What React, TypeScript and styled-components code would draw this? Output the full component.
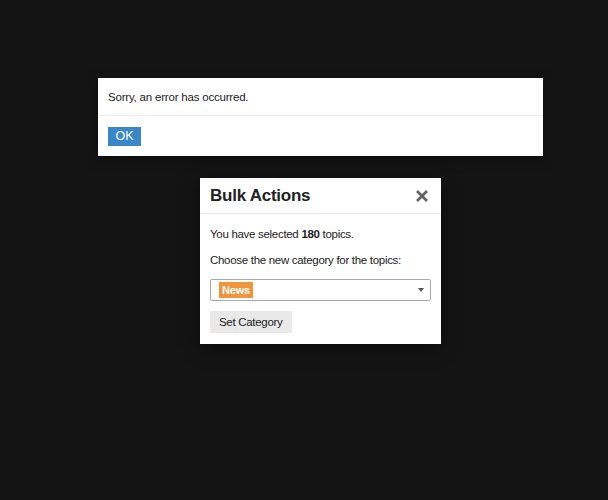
import * as React from 'react';
import styled, { createGlobalStyle } from 'styled-components';

const GlobalStyle = createGlobalStyle`
  html, body {
    margin: 0;
    padding: 0;
    background: #141414;
    font-family: 'Liberation Sans', Arial, Helvetica, sans-serif;
    color: #222;
  }
`;

const Page = styled('div')`
  width: 608px;
  height: 500px;
  padding: 78px 0 0 33px;
  box-sizing: border-box;
  display: flex;
  flex-direction: column;
  align-items: center;
  gap: 22px;
  overflow: hidden;
`;

const Alert = styled('div')`
  width: 445px;
  flex-shrink: 0;
  background: #fff;
  box-shadow: 0 3px 12px rgba(0, 0, 0, 0.4);
`;

const AlertBody = styled('div')`
  height: 37px;
  padding: 0 10px;
  display: flex;
  align-items: center;
  font-size: 11.5px;
  letter-spacing: -0.2px;
  border-bottom: 1px solid #ececec;
`;

const AlertFooter = styled('div')`
  height: 40px;
  padding: 0 10px;
  display: flex;
  align-items: center;
`;

const PrimaryButton = styled('button')`
  height: 19px;
  width: 33px;
  padding: 0;
  border: none;
  background: #3a86c8;
  color: #fff;
  font-family: inherit;
  font-size: 12.5px;
  cursor: pointer;
`;

const Modal = styled('div')`
  width: 241px;
  flex-shrink: 0;
  background: #fff;
  box-shadow: 0 4px 16px rgba(0, 0, 0, 0.5);
`;

const ModalHeader = styled('div')`
  height: 36px;
  padding: 0 12px 0 10px;
  display: flex;
  align-items: center;
  justify-content: space-between;
  border-bottom: 1px solid #ececec;
  box-sizing: border-box;
`;

const Title = styled('h3')`
  margin: 0;
  font-size: 17px;
  font-weight: bold;
  letter-spacing: -0.25px;
  color: #222;
`;

const Close = styled('button')`
  border: none;
  background: none;
  padding: 0;
  width: 14px;
  height: 14px;
  display: flex;
  align-items: center;
  justify-content: center;
  cursor: pointer;
`;

const ModalBody = styled('div')`
  padding: 13px 10px 11px;
  font-size: 11.5px;
  letter-spacing: -0.3px;
`;

const Line = styled('p')`
  margin: 0 0 12px;
  line-height: 14px;
`;

const Select = styled('div')`
  height: 22px;
  border: 1px solid #aaa;
  border-radius: 2px;
  box-sizing: border-box;
  display: flex;
  align-items: center;
  justify-content: space-between;
  padding: 0 6px 0 8px;
  margin: 1px 0 10px;
`;

const Badge = styled('span')`
  background: #f0953c;
  color: #fff;
  font-size: 11px;
  font-weight: bold;
  letter-spacing: -0.2px;
  padding: 2px 3px;
  line-height: 12px;
`;

const Caret = styled('span')`
  width: 0;
  height: 0;
  border-left: 3.5px solid transparent;
  border-right: 3.5px solid transparent;
  border-top: 4px solid #555;
`;

const Button = styled('button')`
  height: 22px;
  padding: 0 9px;
  border: none;
  background: #e9e9e9;
  color: #222;
  font-family: inherit;
  font-size: 11.5px;
  letter-spacing: -0.3px;
  cursor: pointer;
`;

const App: React.FC = () => {
  return (
    <>
      <GlobalStyle />
      <Page>
        <Alert>
          <AlertBody>Sorry, an error has occurred.</AlertBody>
          <AlertFooter>
            <PrimaryButton>OK</PrimaryButton>
          </AlertFooter>
        </Alert>
        <Modal>
          <ModalHeader>
            <Title>Bulk Actions</Title>
            <Close aria-label="close">
              <svg width="14" height="14" viewBox="0 0 14 14">
                <path d="M2 2 L12 12 M12 2 L2 12" stroke="#646464" strokeWidth="2.8" strokeLinecap="butt" />
              </svg>
            </Close>
          </ModalHeader>
          <ModalBody>
            <Line>
              You have selected <b>180</b> topics.
            </Line>
            <Line>Choose the new category for the topics:</Line>
            <Select>
              <Badge>News</Badge>
              <Caret />
            </Select>
            <Button>Set Category</Button>
          </ModalBody>
        </Modal>
      </Page>
    </>
  );
};

export default App;
